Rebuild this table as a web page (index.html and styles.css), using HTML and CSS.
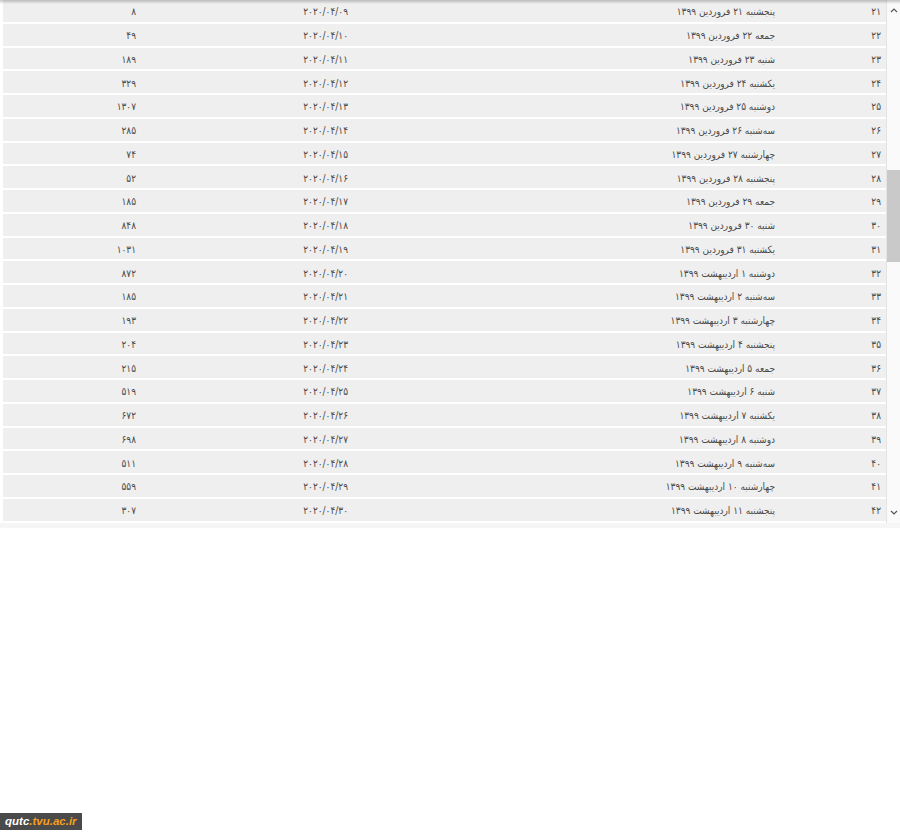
FILE: index.html
```html
<!DOCTYPE html>
<html lang="fa">
<head>
    <meta charset="UTF-8">
    <meta name="viewport" content="width=device-width, initial-scale=1.0">
    <title>آمار روزانه</title>
    <link rel="stylesheet" href="styles.css">
</head>
<body>
    <div class="table-box">
        <div class="rows">
            <div class="row"><span>۲۱</span><span>پنجشنبه ۲۱ فروردین ۱۳۹۹</span><span>۲۰۲۰/۰۴/۰۹</span><span>۸</span></div>
            <div class="row"><span>۲۲</span><span>جمعه ۲۲ فروردین ۱۳۹۹</span><span>۲۰۲۰/۰۴/۱۰</span><span>۴۹</span></div>
            <div class="row"><span>۲۳</span><span>شنبه ۲۳ فروردین ۱۳۹۹</span><span>۲۰۲۰/۰۴/۱۱</span><span>۱۸۹</span></div>
            <div class="row"><span>۲۴</span><span>یکشنبه ۲۴ فروردین ۱۳۹۹</span><span>۲۰۲۰/۰۴/۱۲</span><span>۳۲۹</span></div>
            <div class="row"><span>۲۵</span><span>دوشنبه ۲۵ فروردین ۱۳۹۹</span><span>۲۰۲۰/۰۴/۱۳</span><span>۱۳۰۷</span></div>
            <div class="row"><span>۲۶</span><span>سه‌شنبه ۲۶ فروردین ۱۳۹۹</span><span>۲۰۲۰/۰۴/۱۴</span><span>۲۸۵</span></div>
            <div class="row"><span>۲۷</span><span>چهارشنبه ۲۷ فروردین ۱۳۹۹</span><span>۲۰۲۰/۰۴/۱۵</span><span>۷۴</span></div>
            <div class="row"><span>۲۸</span><span>پنجشنبه ۲۸ فروردین ۱۳۹۹</span><span>۲۰۲۰/۰۴/۱۶</span><span>۵۲</span></div>
            <div class="row"><span>۲۹</span><span>جمعه ۲۹ فروردین ۱۳۹۹</span><span>۲۰۲۰/۰۴/۱۷</span><span>۱۸۵</span></div>
            <div class="row"><span>۳۰</span><span>شنبه ۳۰ فروردین ۱۳۹۹</span><span>۲۰۲۰/۰۴/۱۸</span><span>۸۴۸</span></div>
            <div class="row"><span>۳۱</span><span>یکشنبه ۳۱ فروردین ۱۳۹۹</span><span>۲۰۲۰/۰۴/۱۹</span><span>۱۰۳۱</span></div>
            <div class="row"><span>۳۲</span><span>دوشنبه ۱ اردیبهشت ۱۳۹۹</span><span>۲۰۲۰/۰۴/۲۰</span><span>۸۷۲</span></div>
            <div class="row"><span>۳۳</span><span>سه‌شنبه ۲ اردیبهشت ۱۳۹۹</span><span>۲۰۲۰/۰۴/۲۱</span><span>۱۸۵</span></div>
            <div class="row"><span>۳۴</span><span>چهارشنبه ۳ اردیبهشت ۱۳۹۹</span><span>۲۰۲۰/۰۴/۲۲</span><span>۱۹۳</span></div>
            <div class="row"><span>۳۵</span><span>پنجشنبه ۴ اردیبهشت ۱۳۹۹</span><span>۲۰۲۰/۰۴/۲۳</span><span>۲۰۴</span></div>
            <div class="row"><span>۳۶</span><span>جمعه ۵ اردیبهشت ۱۳۹۹</span><span>۲۰۲۰/۰۴/۲۴</span><span>۲۱۵</span></div>
            <div class="row"><span>۳۷</span><span>شنبه ۶ اردیبهشت ۱۳۹۹</span><span>۲۰۲۰/۰۴/۲۵</span><span>۵۱۹</span></div>
            <div class="row"><span>۳۸</span><span>یکشنبه ۷ اردیبهشت ۱۳۹۹</span><span>۲۰۲۰/۰۴/۲۶</span><span>۶۷۲</span></div>
            <div class="row"><span>۳۹</span><span>دوشنبه ۸ اردیبهشت ۱۳۹۹</span><span>۲۰۲۰/۰۴/۲۷</span><span>۶۹۸</span></div>
            <div class="row"><span>۴۰</span><span>سه‌شنبه ۹ اردیبهشت ۱۳۹۹</span><span>۲۰۲۰/۰۴/۲۸</span><span>۵۱۱</span></div>
            <div class="row"><span>۴۱</span><span>چهارشنبه ۱۰ اردیبهشت ۱۳۹۹</span><span>۲۰۲۰/۰۴/۲۹</span><span>۵۵۹</span></div>
            <div class="row"><span>۴۲</span><span>پنجشنبه ۱۱ اردیبهشت ۱۳۹۹</span><span>۲۰۲۰/۰۴/۳۰</span><span>۳۰۷</span></div>
        </div>
        <div class="scrollbar">
            <svg class="arrow" width="8" height="6" viewBox="0 0 8 6"><polyline points="1,5 4,2 7,5" fill="none" stroke="#555" stroke-width="1.2"/></svg>
            <div class="track"><div class="thumb"></div></div>
            <svg class="arrow" width="8" height="6" viewBox="0 0 8 6"><polyline points="1,1 4,4 7,1" fill="none" stroke="#555" stroke-width="1.2"/></svg>
        </div>
    </div>
    <div class="table-foot"></div>

    <div class="badge"><span class="badge-host">qutc</span><span class="badge-domain">.tvu.ac.ir</span></div>
</body>
</html>
```

FILE: styles.css
```css
body {
    margin: 0;
    background-color: #fff;
    font-family: "DejaVu Sans", sans-serif;
}

.table-box {
    position: relative;
    display: flex;
    width: 900px;
}

.table-box::before {
    content: "";
    position: absolute;
    left: 0;
    right: 0;
    top: 0;
    height: 4px;
    background: linear-gradient(rgba(0, 0, 0, 0.22), rgba(0, 0, 0, 0));
}

.rows {
    direction: rtl;
    margin-left: 3px;
    width: 883px;
}

.row {
    display: grid;
    grid-template-columns: 106px 427px 212px 1fr;
    align-items: center;
    height: 23.75px;
    box-sizing: border-box;
    padding-top: 2px;
    border-bottom: 2px solid #fff;
    background-color: #efefef;
    font-family: "DejaVu Sans Condensed", "DejaVu Sans", sans-serif;
    font-size: 10px;
    color: #4a4a4a;
}

.row span {
    text-align: right;
    padding-right: 5px;
    white-space: nowrap;
}

.scrollbar {
    width: 13px;
    border-left: 1px solid #e4e4e4;
    display: flex;
    flex-direction: column;
    align-items: center;
    background-color: #fafafa;
}

.arrow {
    margin: 7px 0;
}

.track {
    flex: 1;
    width: 100%;
}

.thumb {
    margin-top: 150px;
    height: 92px;
    background-color: #c9c9c9;
}

.table-foot {
    height: 5px;
    background-color: #f6f6f6;
}

.badge {
    position: fixed;
    left: 0;
    bottom: 10px;
    height: 17px;
    line-height: 17px;
    padding: 0 5px;
    background-color: #4a4a4a;
    font-family: "Liberation Sans", sans-serif;
    font-size: 11.5px;
    font-weight: bold;
    font-style: italic;
}

.badge-host {
    color: #fff;
}

.badge-domain {
    color: #f5a01a;
}
```
